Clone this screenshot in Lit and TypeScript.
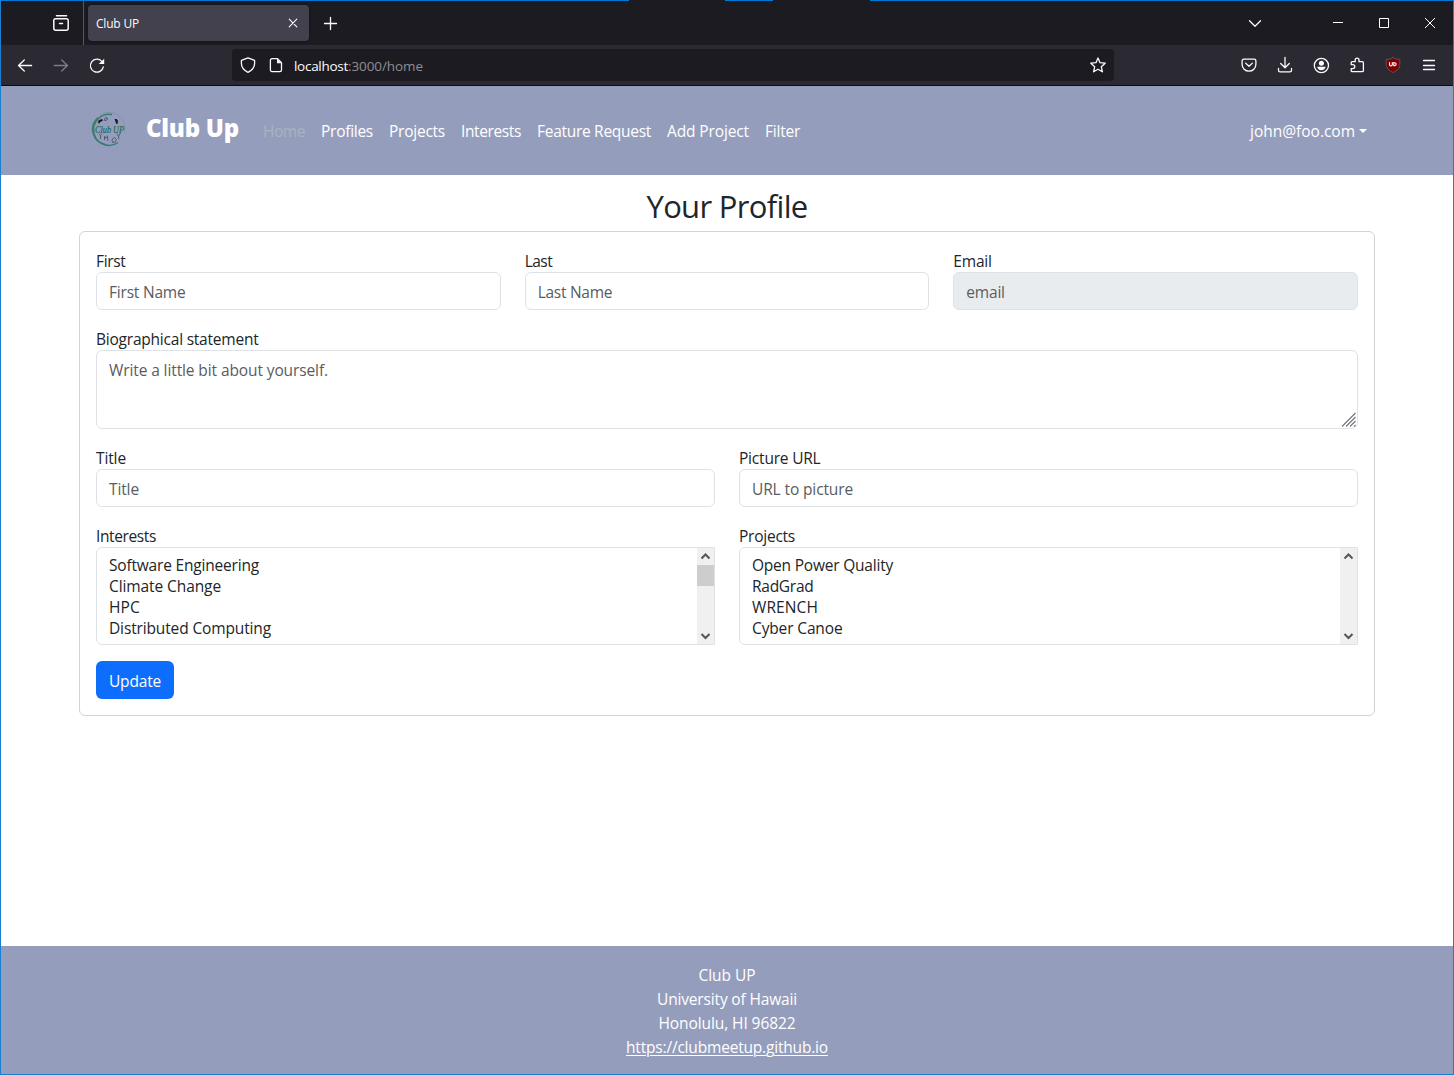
import { LitElement, html, css, svg } from "lit";
import { customElement, property } from "lit/decorators.js";

/** A single line of text whose tracking is adjusted to fill a given width. */
@customElement("fit-text")
class FitText extends LitElement {
  @property({ type: Number }) w = 0;
  @property({ type: Boolean }) underlined = false;
  static styles = css`
    :host { display: inline-block; white-space: nowrap; }
    .t { display: inline-block; }
    .u { text-decoration: underline; text-underline-offset: 2px; text-decoration-thickness: 1px; text-decoration-skip-ink: auto; }
  `;
  render() {
    return html`<span class="t ${this.underlined ? "u" : ""}"><slot></slot></span>`;
  }
  firstUpdated() {
    const span = this.renderRoot.querySelector(".t") as HTMLElement;
    const n = (this.textContent || "").length;
    const natural = span.getBoundingClientRect().width;
    if (this.w && n) {
      span.style.letterSpacing = (this.w - natural) / n + "px";
      this.style.width = this.w + "px";
    }
  }
}

const t = (text: string, w: number) => html`<fit-text w=${w}>${text}</fit-text>`;

const icon = (cls: string, body: unknown, size = 16) =>
  html`<svg class="icon ${cls}" width=${size} height=${size} viewBox="0 0 ${size} ${size}">${body}</svg>`;

const icons = {
  recent: svg`<path d="M3.500 .8h10M2.300 3.800h11.400a1.500 1.500 0 0 1 1.500 1.500v8a2 2 0 0 1-2 2H2.800a2 2 0 0 1-2-2V5.300a1.500 1.500 0 0 1 1.500-1.500zM6.500 8.500h3"/>`,
  close: svg`<path d="M1.200 1.200l7.600 7.600M8.800 1.200L1.200 8.800"/>`,
  plus: svg`<path d="M6.500 .5v12M.5 6.500h12"/>`,
  back: svg`<path d="M14.600 8.500H1.500M7.300 3L1.500 8.500 7.300 14"/>`,
  forward: svg`<path d="M1.400 8.500h13.100M8.700 3l5.800 5.500L8.700 14"/>`,
  reload: svg`<path d="M14.300 9.800a6.500 6.500 0 1 1-1.500-5.400l1.200 1.200"/><path class="solid" d="M15.200 1.700v5.300H9.700z"/>`,
  shield: svg`<path d="M8 .9l6.600 2.500v2.900c0 4-2.200 7-6.600 9-4.400-2-6.600-5-6.600-9V3.400z"/>`,
  page: svg`<path d="M4 1.700h5.500l4 4v7.300a1.600 1.600 0 0 1-1.600 1.600H4A1.600 1.600 0 0 1 2.400 13V3.300A1.600 1.600 0 0 1 4 1.700z"/><path class="solid" d="M9 1.700v4.500h4.500z"/>`,
  star: svg`<path d="M8 1l2 4.700 5.200.5-3.900 3.500 1.100 5.100L8 12.200l-4.400 2.600 1.100-5.100L.8 6.200 6 5.700z"/>`,
  pocket: svg`<path d="M2.800 2.200h10.400a1.700 1.700 0 0 1 1.700 1.700v3.400a6.900 6.900 0 0 1-13.800 0V3.900a1.700 1.700 0 0 1 1.700-1.700zM4.600 6.100L8 9.300l3.400-3.200"/>`,
  download: svg`<path d="M8 .5v10M3.700 6.500L8 10.700l4.300-4.200M1.500 11.500v1.700a1.600 1.600 0 0 0 1.600 1.600h9.800a1.600 1.600 0 0 0 1.600-1.600v-1.700"/>`,
  account: svg`<circle cx="8.400" cy="8.500" r="7.100"/><circle class="solid" cx="8.400" cy="6.300" r="2.500"/><path class="solid" d="M4.200 9.700h8.400c-.3 2.200-2 3.600-4.200 3.600s-3.900-1.400-4.200-3.600z"/>`,
  extension: svg`<path d="M2.200 7.600V5.700a1 1 0 0 1 1-1h3V3a1.900 1.900 0 0 1 3.800 0v1.700h3.400a1 1 0 0 1 1 1v8a1 1 0 0 1-1 1H3.200a1 1 0 0 1-1-1v-2.100h1.600a2 2 0 0 0 0-4z"/>`,
  menu: svg`<path d="M2.500 3.500h11M2.500 8.500h11M2.500 12.500h11"/>`,
  chevron: svg`<path d="M1 .2l5.500 5.500L12 .2"/>`,
};

@customElement("browser-chrome")
class BrowserChrome extends LitElement {
  static styles = css`
    :host { display: block; color: #fbfbfe; }
    .icon { display: block; fill: none; stroke: #fbfbfe; stroke-width: 1.300; stroke-linecap: round; stroke-linejoin: round; flex: none; overflow: visible; }
    .solid { fill: #fbfbfe; stroke: none; }
    .tabs { height: 44px; box-sizing: border-box; background: #1c1b22; display: flex; align-items: center; }
    .recent-box { width: 82px; padding-left: 52px; box-sizing: border-box; }
    .divider { width: 1px; height: 44px; background: #58575f; margin-right: 4px; }
    .tab { width: 221px; height: 36px; border-radius: 4px; background: #42414d; box-sizing: border-box; padding: 0 11px 0 8px; display: flex; align-items: center; justify-content: space-between; font-size: 12px; box-shadow: 0 0 3px rgba(0,0,0,.5); }
    .thin { stroke-width: 1.100; }
    .recent { stroke-width: 1.500; }
    .new { margin-left: 15px; stroke-width: 1.300; margin-top: 1px; }
    .controls { margin-left: auto; display: flex; align-items: center; padding-right: 18px; }
    .win { fill: none; stroke: #fff; stroke-width: 1; display: block; }
    .min { margin-left: 71px; }
    .max { margin-left: 36px; }
    .cls { margin-left: 36px; }
    .bar { height: 40px; background: #2b2a33; display: flex; align-items: center; padding: 0 16px 0 16px; border-bottom: 1px solid #0c0c0d; }
    .nav { display: flex; gap: 20px; width: 215px; }
    .dim { opacity: .4; }
    .url { width: 882px; height: 32px; border-radius: 4px; background: #1c1b22; display: flex; align-items: center; box-sizing: border-box; padding: 0 8px; font-size: 13.500px; }
    .page { margin-left: 12px; }
    .addr { margin-left: 10px; flex: 1; display: flex; padding-top: 1px; }
    .path { color: #8f8e96; }
    .tools { margin-left: auto; display: flex; gap: 20px; }
    .badge { fill: #800000; stroke: #55555c; stroke-width: 1; }
    .ub { fill: none; stroke: #fff; stroke-width: 1.100; }
  `;
  render() {
    return html`
      <div class="tabs">
        <div class="recent-box">${icon("recent", icons.recent, 16)}</div>
        <div class="divider"></div>
        <div class="tab">${t("Club UP", 43)}${icon("thin", icons.close, 10)}</div>
        ${icon("new", icons.plus, 13)}
        <div class="controls">
          ${icon("chev", svg`<g transform="translate(-.5 3.500)">${icons.chevron}</g>`, 13)}
          <svg class="win min" width="10" height="10"><path d="M0 4.500h10" /></svg>
          <svg class="win max" width="10" height="10"><path d="M.5 .5h9v9h-9z" /></svg>
          <svg class="win cls" width="10" height="10"><path d="M0 0l10 10M10 0L0 10" /></svg>
        </div>
      </div>
      <div class="bar">
        <div class="nav">${icon("", icons.back)}${icon("dim", icons.forward)}${icon("", icons.reload)}</div>
        <div class="url">
          ${icon("", icons.shield)}${icon("page", icons.page)}
          <div class="addr">${t("localhost", 54)}<span class="path">${t(":3000/home", 75)}</span></div>
          ${icon("", icons.star)}
        </div>
        <div class="tools">
          ${icon("", icons.pocket)}${icon("", icons.download)}${icon("", icons.account)}${icon("", icons.extension)}
          <svg class="icon" width="16" height="16" viewBox="0 0 16 16">
            <path class="badge" d="M8 .5c2 1.400 4.200 1.900 6.800 1.900v4.800c0 4-2.600 6.300-6.800 8.300-4.200-2-6.800-4.300-6.800-8.300V2.400C3.800 2.400 6 1.900 8 .5z" />
            <path class="ub" d="M4.500 5.500v2a1.400 1.400 0 0 0 2.800 0v-2M8.800 5.500v3.300h1.100a1.600 1.600 0 0 0 0-3.100H8.800" />
          </svg>
          ${icon("", icons.menu)}
        </div>
      </div>
    `;
  }
}

@customElement("club-navbar")
class ClubNavbar extends LitElement {
  static styles = css`
    :host { display: flex; align-items: center; height: 89px; box-sizing: border-box; background: #959dbd; color: #fff; padding: 0 86px 0 85px; font-size: 15.500px; }
    .logo { display: block; margin-right: 17px; margin-top: -4px; }
    .script { font: italic 11px "Liberation Serif", serif; fill: #1f6a4c; stroke: #1f6a4c; stroke-width: .2; }
    .brand { font-size: 24px; font-weight: 800; line-height: 30px; margin: -5px 24px 0 0; }
    .links { display: flex; gap: 16px; line-height: 24px; }
    .active { color: #abb2bf; }
    .user { margin-left: auto; display: flex; align-items: center; gap: 4px; line-height: 24px; }
    .caret { border: 4px solid transparent; border-top-color: #fff; border-bottom: 0; }
  `;
  render() {
    const links: [string, number][] = [
      ["Home", 42], ["Profiles", 52], ["Projects", 56], ["Interests", 60],
      ["Feature Request", 114], ["Add Project", 82], ["Filter", 35],
    ];
    return html`
      <svg class="logo" width="43" height="40" viewBox="0 0 43 40">
        <g fill="none" stroke="#3b7c70">
          <path d="M26 5.600A15.500 15.500 0 1 0 32 33.500" stroke-width="1.500" />
          <path d="M12 8.500a15.500 15.500 0 0 0 7 27" stroke-width="1.400" />
          <path d="M14 6.500A15.500 15.500 0 0 1 38 24" stroke="#72929c" stroke-width=".7" />
        </g>
        <g fill="#17191e">
          <path d="M12 14l.5-2.500 3-1.500 1.500 1-1.500 1.500-1.500.5-.5 1.500z" />
          <path d="M28.500 10l2.300 0 1.200 2-.5 3-1.500-.5-.5-2z" />
        </g>
        <g fill="none" stroke="#454b59" stroke-width=".8">
          <path d="M18 12l1.500-3.500 2 .5-.5 2-2 .5" />
          <path d="M13 25l1.500 1.500 1.500-2M14.500 26.500v3.500M18.500 27v4m0-2l3.500-1m-1-1.500l1 5.500M26 30.500l2.500-2 2 2-1.500 2.500-2.500.5zM31 24.500l1.500 2.500 2-3M32.500 27l.5 3" />
        </g>
        <text class="script" x="9" y="24" textLength="29" lengthAdjust="spacingAndGlyphs">Club UP</text>
      </svg>
      <div class="brand">${t("Club Up", 93)}</div>
      <nav class="links">
        ${links.map(([label, w], i) => html`<a class=${i === 0 ? "active" : ""}>${t(label, w)}</a>`)}
      </nav>
      <div class="user">${t("john@foo.com", 105)}<span class="caret"></span></div>
    `;
  }
}

@customElement("profile-form")
class ProfileForm extends LitElement {
  static styles = css`
    :host { display: block; padding: 12px 78px 0; color: #212529; font-size: 15.500px; line-height: 24px; }
    .title { margin: 0 0 6px; text-align: center; font-weight: 400; font-size: 31px; line-height: 38px; }
    .card { border: 1px solid #d2d3d4; border-radius: 6px; padding: 16px; display: flex; flex-direction: column; gap: 16px; }
    .row { display: grid; gap: 24px; }
    .three { grid-template-columns: repeat(3, 1fr); }
    .two { grid-template-columns: repeat(2, 1fr); }
    .label { height: 24px; padding-top: 1px; box-sizing: border-box; }
    .control { height: 38px; box-sizing: border-box; border: 1px solid #dee2e6; border-radius: 6px; padding: 7px 12px 5px; color: #595c5f; background: #fff; }
    .disabled { background: #e9ecef; }
    .area { height: 79px; display: flex; justify-content: space-between; padding-right: 1px; padding-bottom: 1px; }
    .grip { align-self: flex-end; display: block; stroke: #77777b; stroke-width: 1.200; }
    .select { height: 98px; box-sizing: border-box; border: 1px solid #dee2e6; border-radius: 6px 0 0 6px; display: flex; overflow: hidden; }
    .options { flex: 1; padding: 7px 12px 0; line-height: 21px; }
    .option { height: 21px; }
    .option:nth-child(5) { padding-top: 1px; font-size: 16.500px; }
    .scroll { width: 17px; background: #f0f0f0; display: flex; flex-direction: column; justify-content: space-between; }
    .thumb { height: 21px; background: #cdcdcd; margin-bottom: auto; }
    .arrow { display: block; fill: none; stroke: #555; stroke-width: 2; }
    .button { align-self: flex-start; width: 78px; height: 38px; box-sizing: border-box; border-radius: 6px; background: #0d6efd; color: #fff; padding: 8px 13px; line-height: 24px; }
  `;
  field(label: string, lw: number, hint: string, hw: number, cls = "") {
    return html`<div><div class="label">${t(label, lw)}</div><div class="control ${cls}">${t(hint, hw)}</div></div>`;
  }
  select(label: string, lw: number, items: [string, number][], thumb: boolean) {
    return html`<div>
      <div class="label">${t(label, lw)}</div>
      <div class="select">
        <div class="options">${items.map(([s, w]) => html`<div class="option">${t(s, w)}</div>`)}</div>
        <div class="scroll">
          <svg class="arrow" width="17" height="17"><path d="M4.500 10.500l4-4 4 4" /></svg>
          ${thumb ? html`<div class="thumb"></div>` : ""}
          <svg class="arrow" width="17" height="17"><path d="M4.500 7l4 4 4-4" /></svg>
        </div>
      </div>
    </div>`;
  }
  render() {
    return html`
      <h2 class="title">${t("Your Profile", 161)}</h2>
      <div class="card">
        <div class="row three">
          ${this.field("First", 29.5, "First Name", 76.5)}
          ${this.field("Last", 27.5, "Last Name", 74.5)}
          ${this.field("Email", 38.5, "email", 38.5, "disabled")}
        </div>
        <div>
          <div class="label">${t("Biographical statement", 162.5)}</div>
          <div class="control area">
            ${t("Write a little bit about yourself.", 219)}
            <svg class="grip" width="15" height="15"><path d="M1 14.500L14.500 1M5 14.500L14.500 5M9 14.500L14.500 9M13 14.500l1.500-1.500" /></svg>
          </div>
        </div>
        <div class="row two">
          ${this.field("Title", 30, "Title", 30)}
          ${this.field("Picture URL", 81.5, "URL to picture", 101)}
        </div>
        <div class="row two">
          ${this.select("Interests", 60, [["Software Engineering", 150], ["Climate Change", 112], ["HPC", 31], ["Distributed Computing", 162], ["Renewable Energy", 121]], true)}
          ${this.select("Projects", 56, [["Open Power Quality", 141], ["RadGrad", 61.5], ["WRENCH", 66], ["Cyber Canoe", 90.5]], false)}
        </div>
        <div class="button">${t("Update", 52)}</div>
      </div>
    `;
  }
}

@customElement("app-root")
class AppRoot extends LitElement {
  static styles = css`
    :host { display: block; font-family: "Open Sans", "Noto Sans", sans-serif; }
    .window { width: 1454px; height: 1075px; box-sizing: border-box; border: 1px solid #1a7fd0; border-top: 0; background: #fff; display: flex; flex-direction: column; overflow: hidden; }
    .edge { flex: none; height: 1px; background: linear-gradient(90deg, #0078d7 628px, #1c1b1f 628px 724px, #0078d7 724px 772px, #1c1b1f 772px 869px, #0078d7 869px); }
    .footer { margin-top: auto; height: 128px; box-sizing: border-box; padding-top: 17px; background: #959dbd; color: #fff; text-align: center; font-size: 15.500px; line-height: 24px; }
    .line { height: 24px; }
  `;
  render() {
    return html`
      <div class="window">
        <div class="edge"></div>
        <browser-chrome></browser-chrome>
        <club-navbar></club-navbar>
        <profile-form></profile-form>
        <footer class="footer">
          <div class="line">${t("Club UP", 57)}</div>
          <div class="line">${t("University of Hawaii", 140)}</div>
          <div class="line">${t("Honolulu, HI 96822", 137)}</div>
          <div class="line"><a><fit-text underlined w="202">https://clubmeetup.github.io</fit-text></a></div>
        </footer>
      </div>
    `;
  }
}
